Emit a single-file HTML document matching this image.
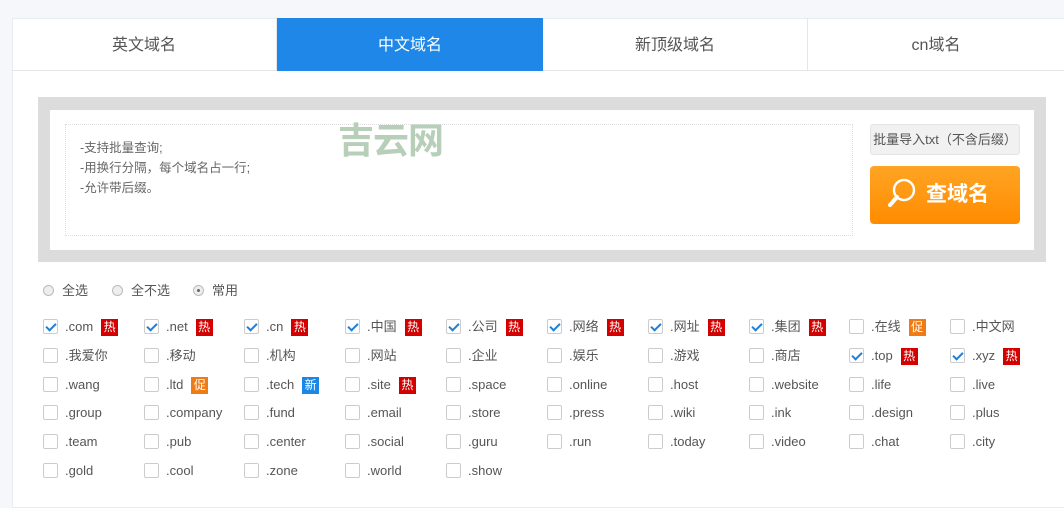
<!DOCTYPE html>
<html><head><meta charset="utf-8"><style>
*{margin:0;padding:0;box-sizing:border-box}
body{width:1064px;height:500px;background:#f5f7fa;position:relative;overflow:hidden;font-family:"Liberation Sans","Noto Sans CJK SC",sans-serif;color:#555}
.panel{position:absolute;left:12px;top:18px;width:1060px;height:490px;background:#fff;border:1px solid #e8ebef}
.tab{position:absolute;top:18px;height:53px;line-height:56px;text-align:center;font-size:16px;color:#555;border-bottom:1px solid #e6e6e6;border-right:1px solid #e6e6e6}
.on{background:#1e87e8;color:#fff;border:none}
.gray{position:absolute;left:38px;top:97px;width:1008px;height:165px;background:#dcdcdc}
.white{position:absolute;left:50px;top:110px;width:984px;height:140px;background:#fff}
.ta{position:absolute;left:65px;top:124px;width:788px;height:112px;border:1px dotted #ddd;font-size:12.5px;line-height:20px;color:#666;padding:13px 0 0 14px}
.logo{position:absolute;left:338px;top:119px;font-size:36px;line-height:44px;font-weight:bold;color:#b7cfb9;letter-spacing:-1px}
.imp{position:absolute;left:870px;top:124px;width:150px;height:31px;background:#f1f1f1;border:1px solid #e4e4e4;border-radius:3px;font-size:13px;line-height:30px;color:#555;text-align:center}
.srch{position:absolute;left:870px;top:166px;width:150px;height:58px;border-radius:4px;background:linear-gradient(#ffa424,#ff8c00);color:#fff;font-size:21px;font-weight:bold;line-height:58px;padding-left:56px}
.radio{position:absolute;top:280px;font-size:13px;color:#555}
.radio i{display:inline-block;width:11px;height:11px;border-radius:50%;border:1px solid #bbb;background:#eee;vertical-align:-1px;margin-right:8px;position:relative}
.it{position:absolute;font-size:13px;color:#555;height:16px;line-height:16px}
.it b{position:absolute;left:-22px;top:0;width:15px;height:15px;border:1px solid #ccc;border-radius:2px;background:#fff}
.it b.c::after{content:"";position:absolute;left:4px;top:1px;width:4px;height:8px;border:solid #1e7fd8;border-width:0 2px 2px 0;transform:rotate(45deg)}
.t{display:inline-block;width:17px;height:17px;line-height:17px;text-align:center;color:#fff;font-size:12px;margin-left:8px;vertical-align:0px}
.h{background:#d40000}.p{background:#f07b14}.n{background:#1b87e6}
</style></head><body>
<div class="panel"></div>
<div class="tab" style="left:12px;width:265px">英文域名</div>
<div class="tab on" style="left:277px;width:266px">中文域名</div>
<div class="tab" style="left:543px;width:265px">新顶级域名</div>
<div class="tab" style="left:808px;width:256px;border-right:none">cn域名</div>
<div class="gray"></div><div class="white"></div>
<div class="ta">-支持批量查询;<br>-用换行分隔，每个域名占一行;<br>-允许带后缀。</div>
<div class="logo">吉云网</div>
<div class="imp">批量导入txt（不含后缀）</div>
<div class="srch">查域名</div>
<svg style="position:absolute;left:884px;top:176px" width="36" height="36" viewBox="0 0 36 36"><circle cx="20" cy="14" r="10" fill="none" stroke="#fff" stroke-width="2.4"/><path d="M13 21 L6 29" stroke="#fff" stroke-width="4" stroke-linecap="round"/></svg>
<div class="radio" style="left:43px"><i></i>全选</div>
<div class="radio" style="left:112px"><i></i>全不选</div>
<div class="radio" style="left:193px"><i><span style="position:absolute;left:3px;top:3px;width:3px;height:3px;border-radius:50%;background:#666"></span></i>常用</div>

<div class="it" style="left:65px;top:319px"><b class="c"></b>.com<span class="t h">热</span></div>
<div class="it" style="left:166px;top:319px"><b class="c"></b>.net<span class="t h">热</span></div>
<div class="it" style="left:266px;top:319px"><b class="c"></b>.cn<span class="t h">热</span></div>
<div class="it" style="left:367px;top:319px"><b class="c"></b>.中国<span class="t h">热</span></div>
<div class="it" style="left:468px;top:319px"><b class="c"></b>.公司<span class="t h">热</span></div>
<div class="it" style="left:569px;top:319px"><b class="c"></b>.网络<span class="t h">热</span></div>
<div class="it" style="left:670px;top:319px"><b class="c"></b>.网址<span class="t h">热</span></div>
<div class="it" style="left:771px;top:319px"><b class="c"></b>.集团<span class="t h">热</span></div>
<div class="it" style="left:871px;top:319px"><b></b>.在线<span class="t p">促</span></div>
<div class="it" style="left:972px;top:319px"><b></b>.中文网</div>

<div class="it" style="left:65px;top:348px"><b></b>.我爱你</div>
<div class="it" style="left:166px;top:348px"><b></b>.移动</div>
<div class="it" style="left:266px;top:348px"><b></b>.机构</div>
<div class="it" style="left:367px;top:348px"><b></b>.网站</div>
<div class="it" style="left:468px;top:348px"><b></b>.企业</div>
<div class="it" style="left:569px;top:348px"><b></b>.娱乐</div>
<div class="it" style="left:670px;top:348px"><b></b>.游戏</div>
<div class="it" style="left:771px;top:348px"><b></b>.商店</div>
<div class="it" style="left:871px;top:348px"><b class="c"></b>.top<span class="t h">热</span></div>
<div class="it" style="left:972px;top:348px"><b class="c"></b>.xyz<span class="t h">热</span></div>

<div class="it" style="left:65px;top:377px"><b></b>.wang</div>
<div class="it" style="left:166px;top:377px"><b></b>.ltd<span class="t p">促</span></div>
<div class="it" style="left:266px;top:377px"><b></b>.tech<span class="t n">新</span></div>
<div class="it" style="left:367px;top:377px"><b></b>.site<span class="t h">热</span></div>
<div class="it" style="left:468px;top:377px"><b></b>.space</div>
<div class="it" style="left:569px;top:377px"><b></b>.online</div>
<div class="it" style="left:670px;top:377px"><b></b>.host</div>
<div class="it" style="left:771px;top:377px"><b></b>.website</div>
<div class="it" style="left:871px;top:377px"><b></b>.life</div>
<div class="it" style="left:972px;top:377px"><b></b>.live</div>

<div class="it" style="left:65px;top:405px"><b></b>.group</div>
<div class="it" style="left:166px;top:405px"><b></b>.company</div>
<div class="it" style="left:266px;top:405px"><b></b>.fund</div>
<div class="it" style="left:367px;top:405px"><b></b>.email</div>
<div class="it" style="left:468px;top:405px"><b></b>.store</div>
<div class="it" style="left:569px;top:405px"><b></b>.press</div>
<div class="it" style="left:670px;top:405px"><b></b>.wiki</div>
<div class="it" style="left:771px;top:405px"><b></b>.ink</div>
<div class="it" style="left:871px;top:405px"><b></b>.design</div>
<div class="it" style="left:972px;top:405px"><b></b>.plus</div>

<div class="it" style="left:65px;top:434px"><b></b>.team</div>
<div class="it" style="left:166px;top:434px"><b></b>.pub</div>
<div class="it" style="left:266px;top:434px"><b></b>.center</div>
<div class="it" style="left:367px;top:434px"><b></b>.social</div>
<div class="it" style="left:468px;top:434px"><b></b>.guru</div>
<div class="it" style="left:569px;top:434px"><b></b>.run</div>
<div class="it" style="left:670px;top:434px"><b></b>.today</div>
<div class="it" style="left:771px;top:434px"><b></b>.video</div>
<div class="it" style="left:871px;top:434px"><b></b>.chat</div>
<div class="it" style="left:972px;top:434px"><b></b>.city</div>

<div class="it" style="left:65px;top:463px"><b></b>.gold</div>
<div class="it" style="left:166px;top:463px"><b></b>.cool</div>
<div class="it" style="left:266px;top:463px"><b></b>.zone</div>
<div class="it" style="left:367px;top:463px"><b></b>.world</div>
<div class="it" style="left:468px;top:463px"><b></b>.show</div>
</body></html>
